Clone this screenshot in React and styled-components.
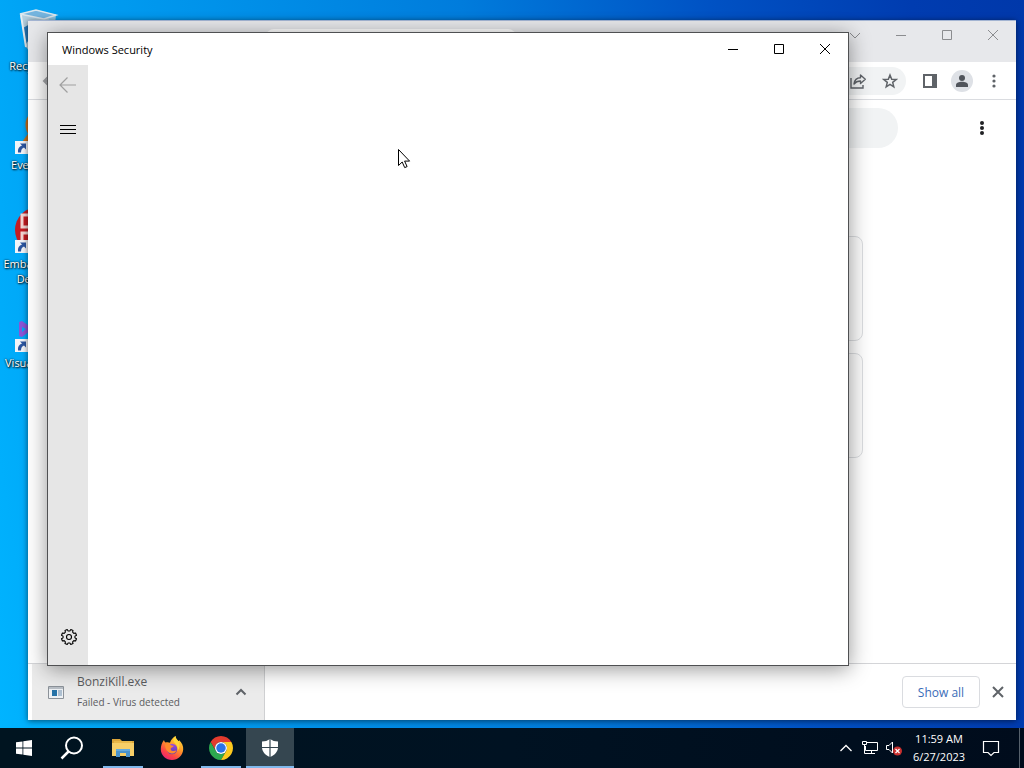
import styled, { createGlobalStyle, css } from 'styled-components'

const GlobalStyle = createGlobalStyle`
  *,
  *::before,
  *::after {
    box-sizing: border-box;
  }

  body {
    margin: 0;
    font-family: 'Open Sans', 'Noto Sans', sans-serif;
    font-size: 11px;
    overflow: hidden;
  }

  button {
    border: 0;
    padding: 0;
    background: none;
    color: inherit;
    font: inherit;
  }

  svg {
    display: block;
    flex: none;
  }
`

const Screen = styled.div`
  display: flex;
  flex-direction: column;
  height: 100vh;
`

const Desktop = styled.main`
  position: relative;
  flex: 1;
  min-height: 0;
  overflow: hidden;
  background: linear-gradient(82deg, #00b4ff 0%, #00a2f4 12%, #007cdc 50%, #0052c4 72%, #003cb0 90%, #0038aa 100%);
`

/* desktop shortcuts */

const Shortcuts = styled.nav`
  display: grid;
  grid-auto-rows: 99px;
  width: 76px;
  padding-top: 8px;
`

const Shortcut = styled.button`
  display: flex;
  flex-direction: column;
  align-items: center;
  gap: 2px;
  color: #fff;
  line-height: 15px;
  text-shadow: 1px 1px 2px #000, 0 0 2px #000;
`

const ShortcutIcon = styled.span`
  position: relative;
  height: 48px;
`

const ShortcutArrow = styled.svg`
  position: absolute;
  left: 1px;
  bottom: 1px;
`

/* windows */

const Window = styled.section`
  position: absolute;
  display: flex;
  flex-direction: column;
  background: #fff;
`

const BrowserWindow = styled(Window)`
  inset: 20px 8px 8px 28px;
  border-top: 1px solid #a3b4d2;
  box-shadow: 0 1px 6px rgba(0, 0, 0, 0.55);
`

const SecurityWindow = styled(Window)`
  inset: 32px 175px 62px 47px;
  border: 1px solid #4f5052;
  box-shadow: 0 3px 20px rgba(0, 0, 0, 0.42);
`

const CaptionButtons = styled.div`
  display: flex;
  height: 32px;
  margin-left: auto;
`

const CaptionButton = styled.button`
  display: grid;
  place-items: center;
  width: 46px;
`

const TabStrip = styled.header`
  display: flex;
  height: 41px;
  padding-left: 238px;
  background: #e7e8eb;

  ${CaptionButtons} {
    height: 28px;
    color: #8b8c8f;
  }
`

const Tab = styled.div`
  width: 250px;
  margin-top: 8px;
  border-radius: 8px 8px 0 0;
  background: #fff;
`

const Toolbar = styled.div`
  display: flex;
  align-items: center;
  height: 38px;
  padding: 0 6px 0 4px;
  border-bottom: 1px solid #dadce0;
`

const ToolButton = styled.button`
  display: grid;
  place-items: center;
  width: 32px;
  height: 32px;
  color: ${({ $muted }) => ($muted ? '#a4a6a9' : '#5f6368')};
`

const AddressBar = styled.div`
  display: flex;
  flex: 1;
  align-items: center;
  justify-content: flex-end;
  height: 28px;
  margin: 0 8px 0 72px;
  border-radius: 14px;
  background: #f1f3f4;
`

const Avatar = styled.span`
  display: grid;
  place-items: center;
  width: 22px;
  height: 22px;
  border-radius: 50%;
  background: #dee1e6;
`

const Page = styled.div`
  flex: 1;
  min-height: 0;
`

const PageHeader = styled.div`
  display: grid;
  grid-template-columns: 1fr minmax(0, 752px) 1fr;
  align-items: center;
  padding-top: 8px;
`

const SearchInput = styled.input`
  grid-column: 2;
  width: 100%;
  height: 40px;
  padding: 0 20px;
  border: 0;
  border-radius: 20px;
  background: #f1f3f4;
`

const PageMenu = styled(ToolButton)`
  justify-self: end;
  margin-right: 18px;
  color: #202124;
`

const Cards = styled.div`
  display: grid;
  gap: 12px;
  max-width: 682px;
  margin: 88px auto 0;
`

const Card = styled.article`
  height: 105px;
  border: 1px solid #dcdee1;
  border-radius: 8px;
  background: #fcfcfc;
`

const Shelf = styled.footer`
  display: flex;
  align-items: center;
  height: 57px;
  padding-right: 2px;
  border-top: 1px solid #d4d5d8;
`

const ShelfItem = styled.div`
  display: flex;
  align-items: center;
  align-self: stretch;
  width: 233px;
  margin-left: 4px;
  margin-right: auto;
  padding-left: 16px;
  border-right: 1px solid #cfd0d2;
  background: #ebebeb;
`

const ShelfText = styled.div`
  flex: 1;
  padding-left: 13px;
  color: #5b5c5f;
  font-size: 10px;
  line-height: 20px;
`

const FileName = styled.div`
  font-size: 12px;
`

const ShelfToggle = styled.button`
  display: grid;
  place-items: center;
  width: 46px;
  height: 40px;
  color: #5f6368;
`

const ShowAll = styled.button`
  width: 78px;
  height: 32px;
  margin-right: 2px;
  border: 1px solid #dadce0;
  border-radius: 4px;
  color: #3a6cb8;
  font-size: 12px;
  font-weight: 500;
`

const TitleBar = styled.header`
  display: flex;
  align-items: center;
  height: 32px;
  padding-left: 14px;
`

const Title = styled.h1`
  margin: 0;
  color: #000;
  font-size: 11px;
  font-weight: 400;
`

const Rail = styled.nav`
  display: flex;
  flex: 1;
  flex-direction: column;
  width: 40px;
  padding-bottom: 4px;
  background: #e6e6e6;
`

const RailButton = styled.button`
  display: grid;
  place-items: center;
  height: ${({ $tall }) => ($tall ? '48px' : '40px')};
  color: ${({ $muted }) => ($muted ? '#a0a0a0' : '#000')};
  ${({ $last }) => $last && css`
    margin-top: auto;
    padding-left: 2px;
  `}
`

const Pointer = styled.svg`
  position: absolute;
  left: 398px;
  top: 149px;
`

/* taskbar */

const Taskbar = styled.footer`
  display: flex;
  height: 40px;
  background: linear-gradient(90deg, #001420 0%, #001222 50%, #000c1c 100%);
  color: #fff;
`

const Pinned = styled.div`
  display: flex;
  gap: 1px;
  margin-left: 3px;
`

const TaskButton = styled.button`
  display: grid;
  place-items: center;
  width: 48px;
  background: ${({ $active }) => ($active ? '#354650' : 'none')};

  &::after {
    content: '';
    grid-area: 1 / 1;
    place-self: end center;
    width: ${({ $active }) => ($active ? '100%' : '40px')};
    height: 2px;
    background: ${({ $running }) => ($running ? '#80b8ec' : 'none')};
  }

  svg {
    grid-area: 1 / 1;
  }
`

const Tray = styled.div`
  display: flex;
  align-items: center;
  margin-left: auto;
`

const TrayButton = styled.button`
  display: grid;
  place-items: center;
  width: 24px;
  height: 40px;
`

const Clock = styled.button`
  width: 66px;
  height: 40px;
  line-height: 18px;
  text-align: center;
`

const ActionCenter = styled(TrayButton)`
  width: 38px;
`

const ShowDesktop = styled.button`
  width: 5px;
  height: 40px;
  margin-left: 9px;
  border-left: 1px solid #56616c;
`

/* icons */

function Line({ d, size = 12, width = 1 }) {
  return (
    <svg width={size} height={size} viewBox={`0 0 ${size} ${size}`} fill="none" stroke="currentColor" strokeWidth={width}>
      <path d={d} />
    </svg>
  )
}

const CHEVRON_DOWN = 'M1 4l5 5 5-5'
const MINIMIZE = 'M1 6.5h10'
const MAXIMIZE = 'M1.5 1.5h9v9h-9z'
const CLOSE = 'M1 1l10 10M11 1L1 11'

function Dots({ r = 1.6, gap = 5 }) {
  return (
    <svg width="16" height="16" fill="currentColor">
      <circle cx="8" cy={8 - gap} r={r} />
      <circle cx="8" cy="8" r={r} />
      <circle cx="8" cy={8 + gap} r={r} />
    </svg>
  )
}

function gearPath(teeth, outer, inner, c) {
  const step = (Math.PI * 2) / teeth
  const offsets = [[-0.32, inner], [-0.2, outer], [0.2, outer], [0.32, inner]]
  const points = []
  for (let i = 0; i < teeth; i++) {
    offsets.forEach(([o, r]) => {
      const a = (i + 0.5 + o) * step
      points.push(`${(c + r * Math.cos(a)).toFixed(2)} ${(c + r * Math.sin(a)).toFixed(2)}`)
    })
  }
  return `M${points.join('L')}z`
}

function GearIcon() {
  return (
    <svg width="18" height="18" fill="none" stroke="currentColor" strokeWidth="1.1" strokeLinejoin="round">
      <path d={gearPath(8, 7.7, 6, 9)} />
      <circle cx="9" cy="9" r="2.5" />
    </svg>
  )
}

function ArrowBadge() {
  return (
    <ShortcutArrow width="13" height="13">
      <path d="M0 0h13v13H0z" fill="#f2f4f8" />
      <path d="M5 2.5h6v6L9 6.6C7 7.5 6 9 6 11.500H3C2.500 8 4 5.500 7 4.500z" fill="#2c56a0" />
    </ShortcutArrow>
  )
}

function RecycleBin() {
  return (
    <svg width="48" height="48" viewBox="0 0 48 48">
      <path d="M8 6l27 5-4 35-18-6z" fill="#c5d4df" opacity="0.9" />
      <path d="M6 6l16-4 20 5-4 36-20 4-6-8z" fill="#b4cfe0" opacity="0.8" />
      <path d="M6 6l16-4 20 5-12 4z" fill="#75b5df" stroke="#dbe7ee" strokeWidth="1.5" />
      <path d="M9 20l7-4 3 10-7 10z" fill="#2276b8" />
      <path d="M7 7l5 32" stroke="#e9eef1" strokeWidth="2" />
    </svg>
  )
}

function EverythingIcon() {
  return (
    <svg width="48" height="48" viewBox="0 0 48 48" fill="none">
      <circle cx="28" cy="18" r="14" stroke="#c8701c" strokeWidth="5" />
      <path d="M18 28L8 42" stroke="#c8701c" strokeWidth="8" />
    </svg>
  )
}

function DevCppIcon() {
  return (
    <svg width="48" height="48" viewBox="0 0 48 48">
      <circle cx="24" cy="24" r="23" fill="#c41c22" />
      <path d="M16 9H8v12h8M16 27H8v9h9" fill="none" stroke="#f3d4d2" strokeWidth="3" />
    </svg>
  )
}

function VisualStudioIcon() {
  return (
    <svg width="48" height="48" viewBox="0 0 48 48">
      <path d="M5 17l3-1 26 18 10-5V17l-10-5L8 32l-3-1zM8 22v5l4-3z" fill="#8a55d6" fillRule="evenodd" />
    </svg>
  )
}

function ShareIcon() {
  return (
    <svg width="18" height="18" viewBox="0 0 18 18" fill="none" stroke="currentColor" strokeWidth="1.4">
      <path d="M2 6v10h12v-3" />
      <path d="M5 12c.5-4 3-6.3 6.5-6.3V3l4.800 4.300-4.800 4.300V9C8.500 9 6.500 10 5 12z" strokeLinejoin="round" />
    </svg>
  )
}

function StarIcon() {
  return (
    <svg width="16" height="16" viewBox="0 0 16 16" fill="none" stroke="currentColor" strokeWidth="1.5">
      <path d="M8 2l1.7 4.2 4.5.3-3.5 2.9 1.1 4.4L8 11.4l-3.8 2.4 1.1-4.4L1.800 6.500l4.500-.3z" />
    </svg>
  )
}

function SidePanelIcon() {
  return (
    <svg width="14" height="14">
      <path d="M1 1h12v12H1z" fill="none" stroke="currentColor" strokeWidth="2" />
      <path d="M9 1h4v12H9z" fill="currentColor" />
    </svg>
  )
}

function PersonIcon() {
  return (
    <svg width="14" height="14" fill="#50545b">
      <circle cx="7" cy="4" r="3" />
      <path d="M1 13v-2c0-2 3-3.2 6-3.200s6 1.200 6 3.200v2z" />
    </svg>
  )
}

function ExeIcon() {
  return (
    <svg width="16" height="13">
      <path d="M.5.5h15v12H.5z" fill="#eef1f4" stroke="#8c9299" />
      <path d="M1 1h14v2H1z" fill="#b9bfc6" />
      <path d="M4 4h5v6H4z" fill="#2673a8" />
      <path d="M10 5h4M10 7h4M10 9h4" stroke="#6f8fae" />
    </svg>
  )
}

function WindowsLogo() {
  return (
    <svg width="16" height="16" viewBox="0 0 16 16" fill="#fff">
      <path d="M0 2.3l6.500-.9v6.200H0zM7.300 1.300L16 0v7.600H7.300zM0 8.400h6.500v6.200L0 13.700zM7.300 8.400H16V16l-8.700-1.300z" />
    </svg>
  )
}

function SearchIcon() {
  return (
    <svg width="24" height="24" fill="none" stroke="#fff" strokeWidth="2">
      <circle cx="14" cy="9.5" r="8" />
      <path d="M8.5 15.5L1.5 22.500" strokeWidth="2.5" />
    </svg>
  )
}

function FolderIcon() {
  return (
    <svg width="22" height="20">
      <path d="M0 1h8l2 2h12v14H0z" fill="#dca63a" />
      <path d="M2 3h18v3H2z" fill="#e9b94a" />
      <path d="M0 5h22v13H0z" fill="#f7cf68" />
      <path d="M4 11h14v8h-4v-4H8v4H4z" fill="#4a93cc" />
      <path d="M4 11h14v2H4z" fill="#64aade" />
    </svg>
  )
}

function FirefoxIcon() {
  return (
    <svg width="24" height="24" viewBox="0 0 24 24">
      <defs>
        <linearGradient id="ff-body" x1="0.8" y1="0" x2="0.2" y2="1">
          <stop offset="0" stopColor="#ffe03d" />
          <stop offset="0.4" stopColor="#ff9a28" />
          <stop offset="0.75" stopColor="#fb4247" />
          <stop offset="1" stopColor="#e5207c" />
        </linearGradient>
        <linearGradient id="ff-globe" x1="0" y1="0" x2="0" y2="1">
          <stop offset="0" stopColor="#9a4ee0" />
          <stop offset="1" stopColor="#5a3bb5" />
        </linearGradient>
      </defs>
      <path d="M4 4c.2 1 .8 2 1.5 2.500C7 6 9 6.200 10 6.700 10.600 4 13 1.500 15.500 0c.2 3 2 4 3.500 5.500V4c3 3 4.500 6 4.200 9.500C22.700 19.600 18 24 12 24S.8 19.500.8 13.300C.8 10 2 6.500 4 4z" fill="url(#ff-body)" />
      <circle cx="12" cy="13" r="5.3" fill="url(#ff-globe)" />
      <path d="M5 8.500c2.500-1.400 5-.6 6.400.9 1 .2 2.200.1 2.200.6-.2 1.200-2.400 1.400-2.800 2.300-.4 1.600.5 3 2.800 2.700 1.300-.2 2-.9 3-.5-1 2.300-3.200 3.500-5.500 3C7.500 16.700 5 13 5 8.500z" fill="#ff8b2c" />
      <path d="M15.500 0c-2.300 2.200-3 4.300-1 6.700 2 2.100 3.700 4.300 3 8.300 2.500-2.800 2.500-6.400 1.500-9.500C17.500 4 15.700 3 15.500 0z" fill="#ffd83a" />
    </svg>
  )
}

function ChromeIcon() {
  return (
    <svg width="24" height="24" viewBox="0 0 48 48">
      <path d="M24 12H44.780A24 24 0 0 0 3.220 12L13.610 30A12 12 0 0 1 24 12z" fill="#e33b2e" />
      <path d="M13.610 30L3.220 12A24 24 0 0 0 24 48L34.390 30A12 12 0 0 1 13.610 30z" fill="#2da94f" />
      <path d="M34.390 30L24 48A24 24 0 0 0 44.780 12H24A12 12 0 0 1 34.390 30z" fill="#fcc91f" />
      <circle cx="24" cy="24" r="12" fill="#fff" />
      <circle cx="24" cy="24" r="9.5" fill="#2a73e8" />
    </svg>
  )
}

function ShieldIcon() {
  return (
    <svg width="18" height="18" viewBox="0 0 18 18">
      <path d="M9 0c2.3 1.7 5 2.500 8 2.500V8c0 4.500-3 8-8 10-5-2-8-5.500-8-10V2.500C4 2.500 6.700 1.700 9 0z" fill="#fff" />
      <path d="M9 0v18M0 8.500h18" stroke="#354650" strokeWidth="1.2" />
    </svg>
  )
}

function NetworkIcon() {
  return (
    <svg width="18" height="16" fill="none" stroke="#fff">
      <path d="M5 2.5h11.500v8H4.500V6M10.500 10.500v3M6 13.500h8" />
      <path d="M1.5 1.5h4v3h-4zM3.500 5v8.500H6" />
    </svg>
  )
}

function MutedIcon() {
  return (
    <svg width="18" height="16" fill="none">
      <path d="M1.5 5.5H4L7.500 2v11L4 9.500H1.500z" stroke="#fff" />
      <circle cx="12.5" cy="11" r="4.5" fill="#c9302f" />
      <path d="M10.5 9l4 4M14.500 9l-4 4" stroke="#fff" strokeWidth="1.2" />
    </svg>
  )
}

function NotificationIcon() {
  return (
    <svg width="18" height="18" fill="none" stroke="#fff" strokeWidth="1.2">
      <path d="M1.5 2.5h15v11h-4.500L9 16.500 6 13.500H1.500z" />
    </svg>
  )
}

const shortcuts = [
  { label: 'Recycle Bin', icon: <RecycleBin /> },
  { label: 'Everything', icon: <EverythingIcon />, linked: true },
  { label: 'Embarcadero Dev-C++', icon: <DevCppIcon />, linked: true },
  { label: 'Visual Studio', icon: <VisualStudioIcon />, linked: true },
]

const tasks = [
  { label: 'File Explorer', icon: <FolderIcon />, running: true },
  { label: 'Firefox', icon: <FirefoxIcon /> },
  { label: 'Google Chrome', icon: <ChromeIcon />, running: true },
  { label: 'Windows Security', icon: <ShieldIcon />, running: true, active: true },
]

function Caption({ withTabSearch }) {
  return (
    <CaptionButtons>
      {withTabSearch && (
        <CaptionButton aria-label="Search tabs">
          <Line d={CHEVRON_DOWN} />
        </CaptionButton>
      )}
      <CaptionButton aria-label="Minimize">
        <Line d={MINIMIZE} />
      </CaptionButton>
      <CaptionButton aria-label="Maximize">
        <Line d={MAXIMIZE} />
      </CaptionButton>
      <CaptionButton aria-label="Close">
        <Line d={CLOSE} />
      </CaptionButton>
    </CaptionButtons>
  )
}

function Browser() {
  return (
    <BrowserWindow aria-label="Google Chrome">
      <TabStrip>
        <Tab />
        <Caption withTabSearch />
      </TabStrip>

      <Toolbar>
        <ToolButton $muted aria-label="Back">
          <Line d="M13 7H3M8 2L3 7l5 5" size={14} width={2} />
        </ToolButton>
        <AddressBar>
          <ToolButton aria-label="Share">
            <ShareIcon />
          </ToolButton>
          <ToolButton aria-label="Bookmark">
            <StarIcon />
          </ToolButton>
        </AddressBar>
        <ToolButton aria-label="Side panel">
          <SidePanelIcon />
        </ToolButton>
        <ToolButton aria-label="Profile">
          <Avatar>
            <PersonIcon />
          </Avatar>
        </ToolButton>
        <ToolButton aria-label="Menu">
          <Dots />
        </ToolButton>
      </Toolbar>

      <Page>
        <PageHeader>
          <SearchInput type="search" aria-label="Search downloads" />
          <PageMenu aria-label="More actions">
            <Dots r={2} />
          </PageMenu>
        </PageHeader>
        <Cards>
          <Card />
          <Card />
        </Cards>
      </Page>

      <Shelf>
        <ShelfItem>
          <ExeIcon />
          <ShelfText>
            <FileName>BonziKill.exe</FileName>
            Failed - Virus detected
          </ShelfText>
          <ShelfToggle aria-label="Download options">
            <Line d="M1.5 8.5L6 4l4.500 4.500" width={2} />
          </ShelfToggle>
        </ShelfItem>
        <ShowAll>Show all</ShowAll>
        <ToolButton aria-label="Close downloads bar">
          <Line d={CLOSE} width={2} />
        </ToolButton>
      </Shelf>
    </BrowserWindow>
  )
}

function Security() {
  return (
    <SecurityWindow aria-label="Windows Security">
      <TitleBar>
        <Title>Windows Security</Title>
        <Caption />
      </TitleBar>
      <Rail>
        <RailButton $muted aria-label="Back">
          <Line d="M17 9H1M8.5 1.5L1 9l7.500 7.500" size={18} width={1.2} />
        </RailButton>
        <RailButton $tall aria-label="Open navigation">
          <Line d="M0 4.5h16M0 8.5h16M0 12.500h16" size={16} />
        </RailButton>
        <RailButton $tall $last aria-label="Settings">
          <GearIcon />
        </RailButton>
      </Rail>
    </SecurityWindow>
  )
}

function App() {
  return (
    <Screen>
      <GlobalStyle />
      <Desktop>
        <Shortcuts aria-label="Desktop">
          {shortcuts.map(({ label, icon, linked }) => (
            <Shortcut key={label}>
              <ShortcutIcon>
                {icon}
                {linked && <ArrowBadge />}
              </ShortcutIcon>
              {label}
            </Shortcut>
          ))}
        </Shortcuts>
        <Browser />
        <Security />
        <Pointer width="13" height="20" viewBox="0 0 13 20">
          <path d="M.5.5v16l3.7-3.500 2.500 5.600 2.400-1-2.500-5.500h5z" fill="#fff" stroke="#000" />
        </Pointer>
      </Desktop>

      <Taskbar>
        <TaskButton aria-label="Start">
          <WindowsLogo />
        </TaskButton>
        <TaskButton aria-label="Search">
          <SearchIcon />
        </TaskButton>
        <Pinned>
          {tasks.map(({ label, icon, running, active }) => (
            <TaskButton key={label} aria-label={label} $running={running} $active={active}>
              {icon}
            </TaskButton>
          ))}
        </Pinned>
        <Tray>
          <TrayButton aria-label="Show hidden icons">
            <Line d="M.5 9L6 3.500 11.500 9" width={1.3} />
          </TrayButton>
          <TrayButton aria-label="Network">
            <NetworkIcon />
          </TrayButton>
          <TrayButton aria-label="Volume">
            <MutedIcon />
          </TrayButton>
          <Clock>
            11:59 AM
            <br />
            6/27/2023
          </Clock>
          <ActionCenter aria-label="Notifications">
            <NotificationIcon />
          </ActionCenter>
          <ShowDesktop aria-label="Show desktop" />
        </Tray>
      </Taskbar>
    </Screen>
  )
}

export default App
